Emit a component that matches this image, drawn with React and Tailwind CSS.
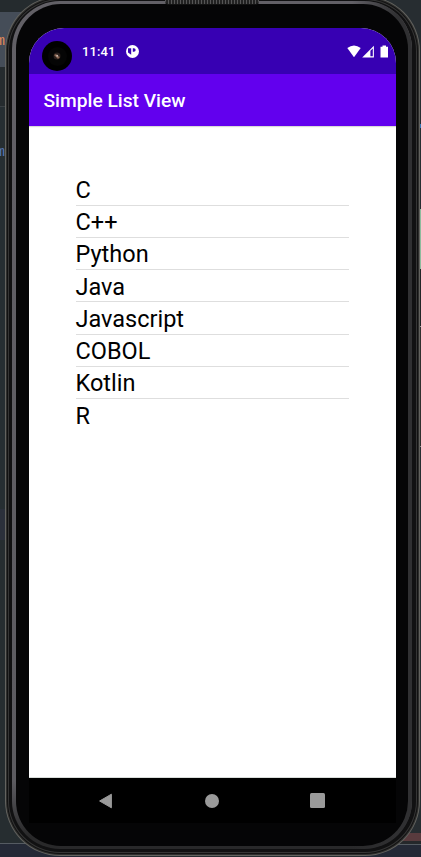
const languages = ['C', 'C++', 'Python', 'Java', 'Javascript', 'COBOL', 'Kotlin', 'R'];

function Backdrop() {
  return (
    <div className="col-start-1 row-start-1 flex h-[857px] justify-between overflow-hidden bg-[#262d31]">
      <div className="flex w-[110px] flex-col font-['Liberation_Mono',monospace] text-[15px] leading-[18px]">
        <div className="h-[12px] shrink-0 bg-[#252b2e]" />
        <div className="h-[55px] shrink-0 bg-[#454d58] pt-[21px] text-[#e08a58]">
          <span className="-ml-[4px]">m</span>
        </div>
        <div className="h-[40px] shrink-0 border-b border-[#3b4145] bg-[#252b2e]" />
        <div className="h-[402px] shrink-0 bg-[#262e32] pt-[37px] text-[#5577b8]">
          <span className="-ml-[4px]">m</span>
        </div>
        <div className="h-[31px] shrink-0 bg-[#2b303b]" />
        <div className="h-[304px] shrink-0 border-b border-[#555b62] bg-[#262d30]" />
        <div className="grow bg-[#242936]" />
      </div>
      <div className="flex w-[60px] flex-col">
        <div className="h-[124px] shrink-0 bg-[#272d31]" />
        <div className="h-[4px] shrink-0 bg-[#3677b7]" />
        <div className="h-[81px] shrink-0 bg-[#272d31]" />
        <div className="h-[60px] shrink-0 bg-[#8dbb9d]" />
        <div className="h-[58px] shrink-0 border-b border-[#999] bg-[#222627]" />
        <div className="h-[120px] shrink-0 border-b border-[#888] bg-[#30302f]" />
        <div className="h-[386px] shrink-0 bg-[#272d31]" />
        <div className="h-[8px] shrink-0 bg-[#593b3e]" />
        <div className="h-[4px] shrink-0 border-b border-[#555b62] bg-[#25282b]" />
        <div className="grow bg-[#242936]" />
      </div>
    </div>
  );
}

function StatusBar() {
  return (
    <div className="flex h-[45.5px] shrink-0 items-center bg-[#3700b3] pl-[13px] pr-[7px] text-white">
      <div className="mt-[11px] flex size-[30px] items-center justify-center rounded-full bg-black">
        <div className="flex size-[19px] items-center justify-center rounded-full bg-[#050505]">
          <svg width="8" height="8" viewBox="0 0 8 8">
            <circle cx="4" cy="4" r="3.5" fill="#2b211d" />
            <path d="M1 3l2-1 2 2 2 1-2 2-2-2z" fill="#8b6753" />
            <circle cx="4.2" cy="3.7" r="1" fill="#c9b5aa" />
          </svg>
        </div>
      </div>
      <span className="ml-[10px] mt-px w-[34px] text-[13px] font-medium leading-[15px] tracking-[0.1px]">11:41</span>
      <svg className="ml-[10px] mt-px" width="13" height="13" viewBox="0 0 13 13">
        <circle cx="6.5" cy="6.5" r="6.5" fill="#fff" />
        <path d="M2 3.2h3.2v6.6L2 7.4z" fill="#3700b3" />
        <path d="M6.8 3.2h1.1a1.7 1.7 0 0 1 0 3.5H6.8z" fill="#3700b3" />
      </svg>
      <svg className="ml-auto mt-px" width="42" height="13" viewBox="0 0 42 13">
        <path d="M.3 3.1Q7-2.3 13.7 3.1L7 12.3z" fill="#fff" />
        <path d="M15.2 12.5L26.9.8v11.7z" fill="#fff" />
        <path d="M23.4 5.8l2.4-2.4v7.8h-2.4z" fill="#3700b3" />
        <path d="M33.5 1.7h2V.4h3.5v1.3h2v10.9h-7.5z" fill="#fff" />
      </svg>
    </div>
  );
}

function Screen() {
  return (
    <div className="flex h-[750px] w-[367px] flex-col overflow-hidden rounded-t-[35px] border-b border-[#d9ddda] bg-white">
      <StatusBar />
      <header className="z-10 flex h-[52.5px] shrink-0 items-center bg-[#6200ee] pl-[14.5px] pt-[2px] shadow-[0_1px_1px_rgba(0,0,0,0.15)]">
        <h1 className="text-[19.2px] font-medium leading-[22px] text-white">Simple List View</h1>
      </header>
      <ul className="ml-[47px] mt-[47.3px] w-[273px] text-[23.5px] text-black">
        {languages.map((name) => (
          <li key={name} className="h-[32.25px] border-b border-[#dedede] pt-[3.5px] leading-[27px] last:border-b-0">
            <span className="-ml-[0.5px]">{name}</span>
          </li>
        ))}
      </ul>
    </div>
  );
}

function NavigationBar() {
  return (
    <nav className="flex h-[45px] w-[367px] items-center justify-between bg-black pl-[69px] pr-[71px]">
      <svg width="15" height="16" viewBox="0 0 15 16">
        <path d="M13.4 1.2v13.6L1.6 8z" fill="#9a9a9a" stroke="#9a9a9a" strokeLinejoin="round" />
      </svg>
      <div className="size-[14px] rounded-full bg-[#9a9a9a]" />
      <div className="size-[15px] rounded-[1.5px] bg-[#9a9a9a]" />
    </nav>
  );
}

export default function App() {
  return (
    <main className="grid h-[857px] w-[421px] overflow-hidden font-['Roboto',sans-serif]">
      <Backdrop />
      <div className="col-start-1 row-start-1 -mt-[4px] ml-[5px] h-[860px] w-[415px] rounded-[55px] bg-[#63635f] p-px">
        <div className="h-[858px] w-[413px] rounded-[54px] bg-[#2e2e2d] p-px">
          <div className="h-[856px] w-[411px] rounded-[53px] bg-[#121212] p-px">
            <div className="h-[854px] w-[409px] rounded-[52px] bg-[#353535] p-px">
              <div className="h-[852px] w-[407px] rounded-[51px] bg-[#111112] pb-[3px] pl-[3px] pr-[4px] pt-px">
                <div className="h-[848px] w-[400px] rounded-[48px] bg-[linear-gradient(#626066_0,#5c5b60_780px,#29292a_835px)] pl-[4px] pt-[3px]">
                  <div className="-ml-[4px] -mt-[3px] h-[848px] w-[400px] rounded-[48px] bg-[linear-gradient(90deg,transparent_340px,#303032_385px)] pl-[4px] pt-[3px]">
                    <div className="h-[842px] w-[392px] rounded-[45px] bg-[#050506] pl-[13px] pt-[24px]">
                      <Screen />
                      <NavigationBar />
                    </div>
                  </div>
                </div>
              </div>
            </div>
          </div>
        </div>
      </div>
      <div className="z-10 col-start-1 row-start-1 ml-[165px] h-[5px] w-[94px] rounded-b-[4px] border-b border-[#111] bg-[#333] bg-[repeating-linear-gradient(90deg,#555_0_1px,#222_1px_3px)]" />
    </main>
  );
}
